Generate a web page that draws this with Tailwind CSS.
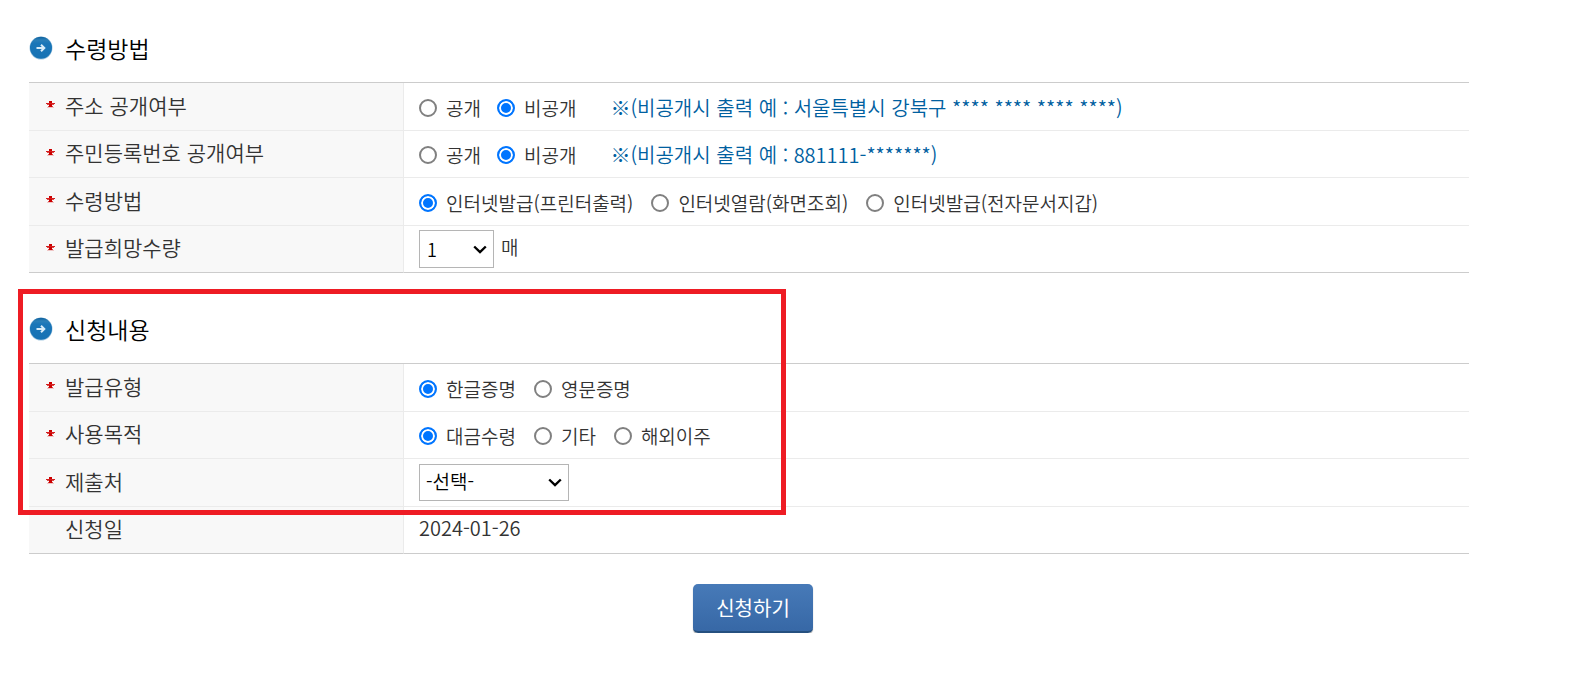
<!DOCTYPE html>
<html lang="ko">
<head>
  <meta charset="UTF-8" />
  <meta name="viewport" content="width=device-width, initial-scale=1.0" />
  <title>수령방법 / 신청내용</title>
  <script src="https://cdn.jsdelivr.net/npm/@tailwindcss/browser@4"></script>
</head>
<body class="bg-white text-[#333] font-['Noto_Sans_CJK_KR',sans-serif]">
  <!-- shared icons -->
  <svg class="absolute size-0" aria-hidden="true">
    <defs>
      <linearGradient id="ball" x1="0" y1="0" x2="0" y2="1">
        <stop offset="0" stop-color="#0d5f9c" />
        <stop offset="0.15" stop-color="#2a7fb8" />
        <stop offset="0.3" stop-color="#1a76b8" />
        <stop offset="1" stop-color="#1672b4" />
      </linearGradient>
    </defs>
    <symbol id="bullet" viewBox="0 0 24 24">
      <circle cx="12" cy="12" r="11.5" fill="#a9cbe2" />
      <circle cx="12" cy="11.7" r="11" fill="url(#ball)" />
      <path d="M7.5 12h7.5M12 8.8l3.3 3.2-3.3 3.2" fill="none" stroke="#d8ecf8" stroke-width="2" />
    </symbol>
    <symbol id="req" viewBox="0 0 9 7">
      <path d="M3 0h3v2h-3zM3 3h3v3h-3z" fill="#cc0000" />
      <path d="M0 2h9v1h-9z" fill="#d42020" />
      <path d="M1 3h7v1h-7zM2 5h5v1h-5z" fill="#cc0000" fill-opacity="0.7" />
      <path d="M1 6h7v1h-7z" fill="#cc0000" fill-opacity="0.2" />
    </symbol>
    <symbol id="chevron" viewBox="0 0 14 9">
      <path d="M1.2 1.5l5.8 5.5 5.8-5.5" fill="none" stroke="#000" stroke-width="2.4" />
    </symbol>
  </svg>

  <form class="ml-[29px] mr-[112px] pt-7">
    <section>
      <h2 class="flex items-center gap-3 h-10 text-[23px] font-[350] text-black">
        <svg class="size-6"><use href="#bullet" /></svg>수령방법
      </h2>
      <table class="mt-[14px] w-full table-fixed border-separate border-spacing-0 border-t border-[#ccc] text-[19px] leading-6 font-[350]">
        <tbody>
          <tr class="h-12">
            <th scope="row" class="w-[375px] bg-[#f8f8f8] border-r border-b border-[#ebebeb] pl-[17px] pb-1 text-left text-[21px] font-[350]">
              <span class="flex items-center gap-[10px]"><svg class="w-[9px] h-[7px]"><use href="#req" /></svg>주소 공개여부</span>
            </th>
            <td class="border-b border-[#ebebeb] pl-[15px] pt-[2px]">
              <div class="flex items-center gap-4">
                <label class="flex items-center gap-[9px]"><input type="radio" name="addr" class="appearance-none size-[18px] rounded-full border-2 border-[#808080] checked:border-[#0075ff] checked:bg-[#0075ff] checked:shadow-[inset_0_0_0_2px_#fff]" />공개</label>
                <label class="flex items-center gap-[9px]"><input type="radio" name="addr" checked class="appearance-none size-[18px] rounded-full border-2 border-[#808080] checked:border-[#0075ff] checked:bg-[#0075ff] checked:shadow-[inset_0_0_0_2px_#fff]" />비공개</label>
                <span class="ml-[18px] text-[20px] text-[#0060a0]">※(비공개시 출력 예 : 서울특별시 강북구 **** **** **** ****)</span>
              </div>
            </td>
          </tr>
          <tr class="h-[47px]">
            <th scope="row" class="bg-[#f8f8f8] border-r border-b border-[#ebebeb] pl-[17px] pb-1 text-left text-[21px] font-[350]">
              <span class="flex items-center gap-[10px]"><svg class="w-[9px] h-[7px]"><use href="#req" /></svg>주민등록번호 공개여부</span>
            </th>
            <td class="border-b border-[#ebebeb] pl-[15px] pt-[2px]">
              <div class="flex items-center gap-4">
                <label class="flex items-center gap-[9px]"><input type="radio" name="rrn" class="appearance-none size-[18px] rounded-full border-2 border-[#808080] checked:border-[#0075ff] checked:bg-[#0075ff] checked:shadow-[inset_0_0_0_2px_#fff]" />공개</label>
                <label class="flex items-center gap-[9px]"><input type="radio" name="rrn" checked class="appearance-none size-[18px] rounded-full border-2 border-[#808080] checked:border-[#0075ff] checked:bg-[#0075ff] checked:shadow-[inset_0_0_0_2px_#fff]" />비공개</label>
                <span class="ml-[18px] text-[20px] text-[#0060a0]">※(비공개시 출력 예 : 881111-*******)</span>
              </div>
            </td>
          </tr>
          <tr class="h-12">
            <th scope="row" class="bg-[#f8f8f8] border-r border-b border-[#ebebeb] pl-[17px] pb-1 text-left text-[21px] font-[350]">
              <span class="flex items-center gap-[10px]"><svg class="w-[9px] h-[7px]"><use href="#req" /></svg>수령방법</span>
            </th>
            <td class="border-b border-[#ebebeb] pl-[15px] pt-[2px]">
              <div class="flex items-center gap-[18px]">
                <label class="flex items-center gap-[9px]"><input type="radio" name="method" checked class="appearance-none size-[18px] rounded-full border-2 border-[#808080] checked:border-[#0075ff] checked:bg-[#0075ff] checked:shadow-[inset_0_0_0_2px_#fff]" />인터넷발급(프린터출력)</label>
                <label class="flex items-center gap-[9px]"><input type="radio" name="method" class="appearance-none size-[18px] rounded-full border-2 border-[#808080] checked:border-[#0075ff] checked:bg-[#0075ff] checked:shadow-[inset_0_0_0_2px_#fff]" />인터넷열람(화면조회)</label>
                <label class="flex items-center gap-[9px]"><input type="radio" name="method" class="appearance-none size-[18px] rounded-full border-2 border-[#808080] checked:border-[#0075ff] checked:bg-[#0075ff] checked:shadow-[inset_0_0_0_2px_#fff]" />인터넷발급(전자문서지갑)</label>
              </div>
            </td>
          </tr>
          <tr class="h-[47px]">
            <th scope="row" class="bg-[#f8f8f8] border-r border-b border-r-[#ebebeb] border-b-[#ccc] pl-[17px] pb-1 text-left text-[21px] font-[350]">
              <label for="qty" class="flex items-center gap-[10px]"><svg class="w-[9px] h-[7px]"><use href="#req" /></svg>발급희망수량</label>
            </th>
            <td class="border-b border-[#ccc] pl-[15px]">
              <div class="flex items-center gap-[7px]">
                <div class="relative">
                  <select id="qty" class="appearance-none block w-[75px] h-[38px] border border-[#b5b5b5] bg-white pl-[7px] text-[18px] text-black">
                    <option>1</option>
                    <option>2</option>
                    <option>3</option>
                  </select>
                  <svg class="absolute right-[7px] top-[15px] w-[14px] h-[9px] pointer-events-none"><use href="#chevron" /></svg>
                </div>
                <span class="pb-1">매</span>
              </div>
            </td>
          </tr>
        </tbody>
      </table>
    </section>

    <section class="relative mt-9">
      <h2 class="flex items-center gap-3 h-10 text-[23px] font-[350] text-black">
        <svg class="size-6"><use href="#bullet" /></svg>신청내용
      </h2>
      <table class="mt-[14px] w-full table-fixed border-separate border-spacing-0 border-t border-[#ccc] text-[19px] leading-6 font-[350]">
        <tbody>
          <tr class="h-12">
            <th scope="row" class="w-[375px] bg-[#f8f8f8] border-r border-b border-[#ebebeb] pl-[17px] pb-1 text-left text-[21px] font-[350]">
              <span class="flex items-center gap-[10px]"><svg class="w-[9px] h-[7px]"><use href="#req" /></svg>발급유형</span>
            </th>
            <td class="border-b border-[#ebebeb] pl-[15px] pt-[2px]">
              <div class="flex items-center gap-[18px]">
                <label class="flex items-center gap-[9px]"><input type="radio" name="type" checked class="appearance-none size-[18px] rounded-full border-2 border-[#808080] checked:border-[#0075ff] checked:bg-[#0075ff] checked:shadow-[inset_0_0_0_2px_#fff]" />한글증명</label>
                <label class="flex items-center gap-[9px]"><input type="radio" name="type" class="appearance-none size-[18px] rounded-full border-2 border-[#808080] checked:border-[#0075ff] checked:bg-[#0075ff] checked:shadow-[inset_0_0_0_2px_#fff]" />영문증명</label>
              </div>
            </td>
          </tr>
          <tr class="h-[47px]">
            <th scope="row" class="bg-[#f8f8f8] border-r border-b border-[#ebebeb] pl-[17px] pb-1 text-left text-[21px] font-[350]">
              <span class="flex items-center gap-[10px]"><svg class="w-[9px] h-[7px]"><use href="#req" /></svg>사용목적</span>
            </th>
            <td class="border-b border-[#ebebeb] pl-[15px] pt-[2px]">
              <div class="flex items-center gap-[18px]">
                <label class="flex items-center gap-[9px]"><input type="radio" name="purpose" checked class="appearance-none size-[18px] rounded-full border-2 border-[#808080] checked:border-[#0075ff] checked:bg-[#0075ff] checked:shadow-[inset_0_0_0_2px_#fff]" />대금수령</label>
                <label class="flex items-center gap-[9px]"><input type="radio" name="purpose" class="appearance-none size-[18px] rounded-full border-2 border-[#808080] checked:border-[#0075ff] checked:bg-[#0075ff] checked:shadow-[inset_0_0_0_2px_#fff]" />기타</label>
                <label class="flex items-center gap-[9px]"><input type="radio" name="purpose" class="appearance-none size-[18px] rounded-full border-2 border-[#808080] checked:border-[#0075ff] checked:bg-[#0075ff] checked:shadow-[inset_0_0_0_2px_#fff]" />해외이주</label>
              </div>
            </td>
          </tr>
          <tr class="h-12">
            <th scope="row" class="bg-[#f8f8f8] border-r border-b border-[#ebebeb] pl-[17px] pb-1 text-left text-[21px] font-[350]">
              <label for="dest" class="flex items-center gap-[10px]"><svg class="w-[9px] h-[7px]"><use href="#req" /></svg>제출처</label>
            </th>
            <td class="border-b border-[#ebebeb] pl-[15px]">
              <div class="relative w-[150px]">
                <select id="dest" class="appearance-none block w-full h-[37px] border border-[#b5b5b5] bg-white pl-[6px] pb-1 text-[19px] text-black">
                  <option>-선택-</option>
                </select>
                <svg class="absolute right-[7px] top-[14px] w-[14px] h-[9px] pointer-events-none"><use href="#chevron" /></svg>
              </div>
            </td>
          </tr>
          <tr class="h-[47px]">
            <th scope="row" class="bg-[#f8f8f8] border-r border-b border-r-[#ebebeb] border-b-[#ccc] pl-9 pb-1 text-left text-[21px] font-[350]">신청일</th>
            <td class="border-b border-[#ccc] pl-[15px] pb-1 text-[20px]">2024-01-26</td>
          </tr>
        </tbody>
      </table>
      <!-- highlight frame -->
      <div class="absolute -left-[11px] -top-5 w-[768px] h-[226px] border-[5px] border-[#ee1c24] pointer-events-none"></div>
    </section>

    <div class="mt-[30px] pl-2 flex justify-center">
      <button type="submit" class="w-[120px] h-[49px] rounded-[5px] border-b-2 border-[#25507f] bg-linear-to-b from-[#477ab8] to-[#3768a6] shadow-[0_1px_1px_#999] text-[20px] text-white">신청하기</button>
    </div>
  </form>
</body>
</html>
